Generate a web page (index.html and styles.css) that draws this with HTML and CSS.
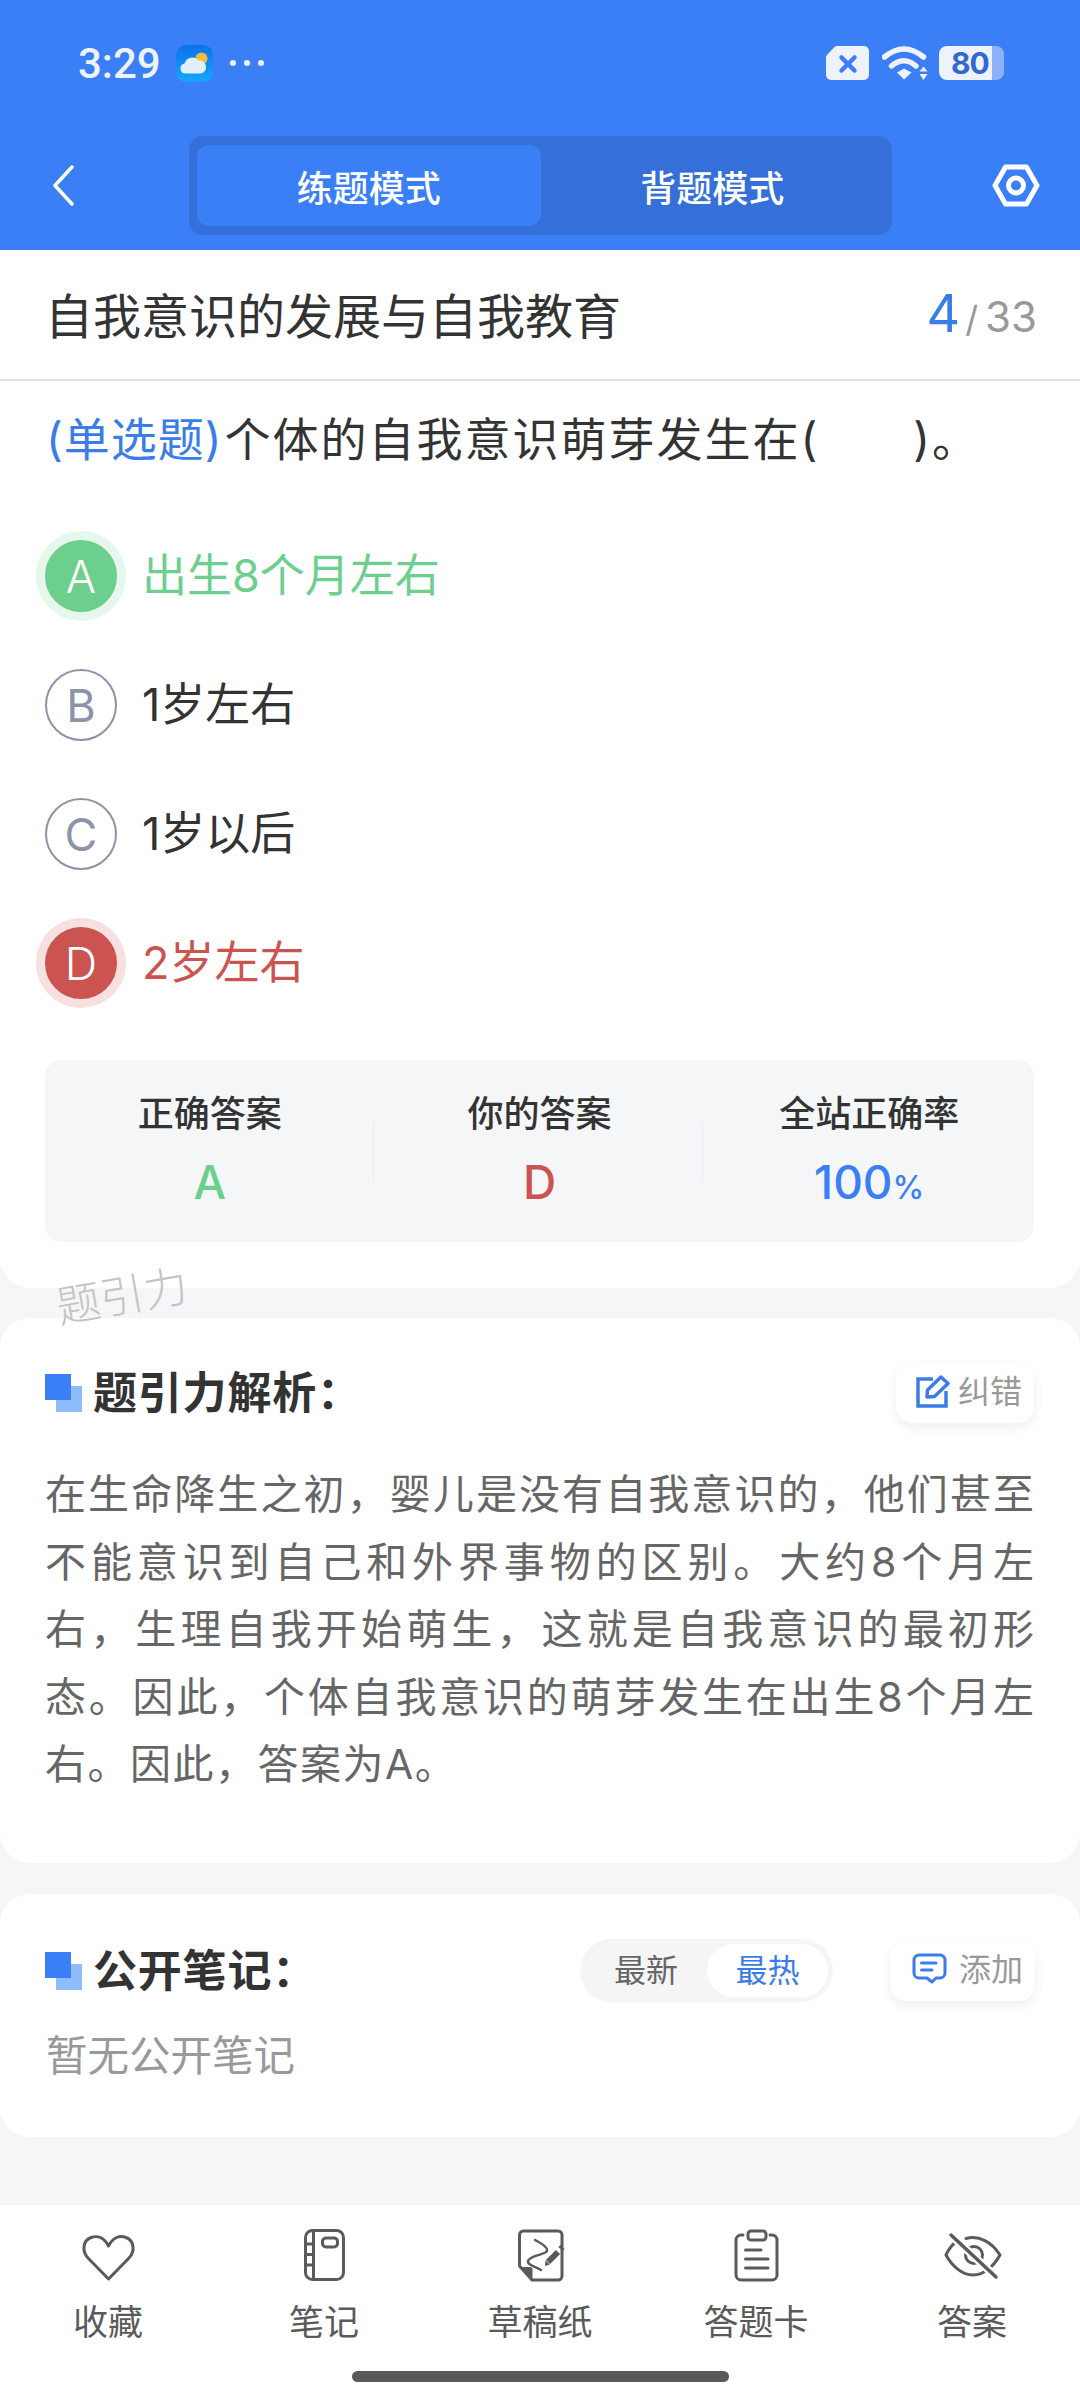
FILE: index.html
```html
<!DOCTYPE html>
<html lang="zh-CN">
<head>
  <meta charset="UTF-8">
  <meta name="viewport" content="width=device-width, initial-scale=1.0">
  <title>练题模式</title>
  <link rel="stylesheet" href="styles.css">
</head>
<body>
  <header class="top">
    <div class="status">
      <span class="time">3:29</span>
      <svg class="weather" width="37" height="37" viewBox="0 0 37 37">
        <defs>
          <linearGradient id="sky" x1="0" y1="0" x2="0" y2="1">
            <stop offset="0" stop-color="#0a72ef"/>
            <stop offset="1" stop-color="#17a6fb"/>
          </linearGradient>
        </defs>
        <rect width="37" height="37" rx="10" fill="url(#sky)"/>
        <circle cx="25.500" cy="13.500" r="6" fill="#f6bb3c"/>
        <path d="M9.500 28.500a5 5 0 0 1-1-9.900a8 8 0 0 1 14-3a6.500 6.500 0 0 1 2 13z" fill="#dff0fc"/>
      </svg>
      <span class="dots"><i></i><i></i><i></i></span>
      <span class="status-right">
        <svg width="43" height="34" viewBox="0 0 43 34">
          <path d="M11 0H38a5 5 0 0 1 5 5V29a5 5 0 0 1-5 5H5a5 5 0 0 1-5-5V12a4 4 0 0 1 1-3L8 1.500A4 4 0 0 1 11 0z" fill="#edf2fd"/>
          <path d="M15.500 11.500l13 13M28.500 11.500l-13 13" stroke="#3b7ff6" stroke-width="4.500" stroke-linecap="round"/>
        </svg>
        <svg class="wifi" width="46" height="34" viewBox="0 0 46 34">
          <path d="M2.500 11Q22-5 41.500 11" fill="none" stroke="#edf2fd" stroke-width="5.500" stroke-linecap="round"/>
          <path d="M9.500 20Q22 9.500 34 20" fill="none" stroke="#edf2fd" stroke-width="5.500" stroke-linecap="round"/>
          <path d="M15 26.500L22 22.500L29.500 26.500L22 33.500z" fill="#edf2fd"/>
          <path d="M37.500 25.500L41.500 20.500L45.500 25.500zM37.500 28H45.500L41.500 34z" fill="#edf2fd"/>
        </svg>
        <span class="battery">80</span>
      </span>
    </div>
    <nav class="bar">
      <svg class="back" width="22" height="41" viewBox="0 0 22 41">
        <path d="M20 2L3 20.500L20 39" fill="none" stroke="#fff" stroke-width="3.500" stroke-linecap="round" stroke-linejoin="round"/>
      </svg>
      <div class="tabs">
        <span class="tab active">练题模式</span>
        <span class="tab">背题模式</span>
      </div>
      <svg class="gear" width="48" height="43" viewBox="0 0 48 43">
        <path d="M13.500 3H34.500L45 21.500L34.500 40H13.500L3 21.500z" fill="none" stroke="#fff" stroke-width="5" stroke-linejoin="round"/>
        <circle cx="24" cy="21.500" r="7.500" fill="none" stroke="#fff" stroke-width="5"/>
      </svg>
    </nav>
  </header>

  <section class="card question">
    <div class="chapter">
      <h1>自我意识的发展与自我教育</h1>
      <div class="count"><b>4</b><span class="slash">/</span><span>33</span></div>
    </div>
    <p class="stem"><span class="kind">(单选题)</span>个体的自我意识萌芽发生在(<span class="blank"></span>)。</p>

    <ul class="options">
      <li class="option right"><span class="letter">A</span><span class="text">出生8个月左右</span></li>
      <li class="option"><span class="letter">B</span><span class="text">1岁左右</span></li>
      <li class="option"><span class="letter">C</span><span class="text">1岁以后</span></li>
      <li class="option wrong"><span class="letter">D</span><span class="text">2岁左右</span></li>
    </ul>

    <div class="stats">
      <div class="stat">
        <span class="stat-name">正确答案</span>
        <span class="stat-value green">A</span>
      </div>
      <div class="stat">
        <span class="stat-name">你的答案</span>
        <span class="stat-value red">D</span>
      </div>
      <div class="stat">
        <span class="stat-name">全站正确率</span>
        <span class="stat-value blue">100<small>%</small></span>
      </div>
    </div>
  </section>

  <div class="watermark">题引力</div>

  <section class="card analysis">
    <div class="card-head">
      <h2 class="heading">题引力解析：</h2>
      <span class="mini-btn">
        <svg width="34" height="33" viewBox="0 0 34 33">
          <path d="M17 4H2V31H30V16" fill="none" stroke="#3b7de8" stroke-width="3.500"/>
          <path d="M11 22L11.500 15L25 2L32 8.500L18.500 21.500z" fill="none" stroke="#3b7de8" stroke-width="3.500" stroke-linejoin="round"/>
        </svg>
        <span class="mini-text">纠错</span>
      </span>
    </div>
    <div class="explain">
      <span class="line">在生命降生之初，婴儿是没有自我意识的，他们甚至</span>
      <span class="line">不能意识到自己和外界事物的区别。大约8个月左</span>
      <span class="line">右，生理自我开始萌生，这就是自我意识的最初形</span>
      <span class="line">态。因此，个体自我意识的萌芽发生在出生8个月左</span>
      <span class="line last">右。因此，答案为A。</span>
    </div>
  </section>

  <section class="card notes">
    <div class="card-head">
      <h2 class="heading">公开笔记：</h2>
      <div class="sort">
        <span class="sort-item">最新</span>
        <span class="sort-item on">最热</span>
      </div>
      <span class="mini-btn add">
        <svg width="35" height="31" viewBox="0 0 35 31">
          <path d="M7 2H28a5 5 0 0 1 5 5V20a5 5 0 0 1-5 5H24L20 29L15 25H7a5 5 0 0 1-5-5V7a5 5 0 0 1 5-5z" fill="none" stroke="#3b7de8" stroke-width="3" stroke-linejoin="round"/>
          <path d="M9.500 10H24M9.500 17H20" stroke="#3b7de8" stroke-width="3" stroke-linecap="round"/>
        </svg>
        <span class="mini-text">添加</span>
      </span>
    </div>
    <p class="empty">暂无公开笔记</p>
  </section>

  <footer class="tools">
    <div class="tool-row">
      <div class="tool">
        <svg width="60" height="60" viewBox="0 0 60 60">
          <path d="M30.500 53L10 32C3.500 25 5 14.500 13 11.500C20 9 26.500 12 30.500 20C34.500 12 41 9 48 11.500C56 14.500 57.500 25 51 32z" class="ink"/>
        </svg>
        <span>收藏</span>
      </div>
      <div class="tool">
        <svg width="60" height="60" viewBox="0 0 60 60">
          <rect x="11.500" y="4.500" width="38" height="49" rx="7" class="ink"/>
          <path d="M19.500 4.500V53.500M11.500 18H19.500M11.500 28.500H19.500M11.500 39H19.500" class="ink"/>
          <rect x="28.500" y="12" width="15" height="9" rx="3.500" class="ink"/>
        </svg>
        <span>笔记</span>
      </div>
      <div class="tool">
        <svg width="60" height="60" viewBox="0 0 60 60">
          <path d="M9.500 40V9a4 4 0 0 1 4-4H48a4 4 0 0 1 4 4V50a4 4 0 0 1-4 4H22z" class="ink"/>
          <path d="M10.500 41H20a2.500 2.500 0 0 1 2.500 2.500V53z" fill="#5a5a5a"/>
          <path d="M25 14C31 17 38 21 37 25C35 29 20 29 18 35C17 39 26 41 31 44" class="ink thin"/>
          <path d="M38 36L48 26" class="ink fat"/>
          <path d="M35 40L35.500 34.500L40 38.500z" fill="#5a5a5a"/>
          <path d="M50.500 23L52.500 21" class="ink fat"/>
        </svg>
        <span>草稿纸</span>
      </div>
      <div class="tool">
        <svg width="60" height="60" viewBox="0 0 60 60">
          <path d="M17 9H15a5 5 0 0 0-5 5V49a5 5 0 0 0 5 5H46a5 5 0 0 0 5-5V14a5 5 0 0 0-5-5H44" class="ink"/>
          <rect x="22" y="5" width="18" height="9" rx="3" class="ink"/>
          <path d="M19.500 24H35M19.500 33H42M19.500 42H42" class="ink"/>
        </svg>
        <span>答题卡</span>
      </div>
      <div class="tool">
        <svg width="60" height="60" viewBox="0 0 60 60">
          <path d="M4 29C7 22 11 18 15 15M24 12.500C37 9 50 16 58 29C52 40 42 49 31 49C20 49 10 40 4 29" class="ink"/>
          <circle cx="32" cy="29" r="8.500" class="ink"/>
          <path d="M9 9L54 51" stroke="#fff" stroke-width="8"/>
          <path d="M9 9L54 51" class="ink wide"/>
        </svg>
        <span>答案</span>
      </div>
    </div>
    <div class="home-bar"></div>
  </footer>
</body>
</html>
```

FILE: styles.css
```css
* {
  box-sizing: border-box;
}

body {
  margin: 0;
  width: 1080px;
  height: 2400px;
  position: relative;
  display: flex;
  flex-direction: column;
  overflow: hidden;
  background-color: #f5f6f8;
  color: #333;
  font-family: Inter, "Noto Sans CJK SC", sans-serif;
}

h1, h2, p, ul {
  margin: 0;
  padding: 0;
}

svg {
  display: block;
  flex-shrink: 0;
}

.top {
  height: 250px;
  background-color: #3b7ff6;
  color: #fff;
}

.status {
  height: 126px;
  padding: 0 88px 0 78px;
  display: flex;
  align-items: center;
  color: #edf2fd;
}

.time {
  width: 98px;
  font-family: Roboto, sans-serif;
  font-size: 42px;
  font-weight: 500;
}

.dots {
  margin-left: 17px;
  display: flex;
  gap: 8px;
}

.dots i {
  width: 6px;
  height: 6px;
  border-radius: 50%;
  background-color: #edf2fd;
}

.status-right {
  margin-left: auto;
  display: flex;
  align-items: center;
}

.wifi {
  margin: 0 11px 0 13px;
}

.battery {
  position: relative;
  width: 53px;
  height: 34px;
  padding-left: 12px;
  border-radius: 8px 0 0 8px;
  background-color: #edf2fd;
  color: #3169d3;
  font-size: 30px;
  font-weight: 700;
  line-height: 34px;
  letter-spacing: -1px;
}

.battery::after {
  content: "";
  position: absolute;
  left: 53px;
  top: 0;
  width: 12px;
  height: 34px;
  border-radius: 0 8px 8px 0;
  background-color: #8db0f8;
}

.bar {
  padding: 0 40px 0 52px;
  display: flex;
  align-items: center;
  height: 119px;
}

.tabs {
  margin-left: 115px;
  width: 703px;
  height: 99px;
  padding: 9px 8px;
  display: flex;
  border-radius: 14px;
  background-color: #356fd9;
}

.tab {
  flex: 1;
  display: flex;
  align-items: center;
  justify-content: center;
  border-radius: 12px;
  font-size: 36px;
  font-weight: 500;
}

.tab.active {
  background-color: #3b7ff6;
}

.gear {
  margin-left: auto;
}

.card {
  background-color: #fff;
  border-radius: 30px;
}

.question {
  height: 1038px;
  border-radius: 0 0 30px 30px;
}

.chapter {
  height: 131px;
  padding: 0 43px 3px 45px;
  display: flex;
  align-items: center;
  justify-content: space-between;
  border-bottom: 2px solid #e2e2e2;
}

h1 {
  font-size: 48px;
  font-weight: 400;
}

.count {
  display: flex;
  align-items: baseline;
  color: #999;
  font-size: 42px;
}

.count b {
  color: #3b7de8;
  font-size: 52px;
  font-weight: 400;
}

.slash {
  margin: 0 7px 0 5px;
  font-size: 36px;
}

.stem {
  margin-top: 28px;
  padding-left: 46px;
  font-size: 46px;
  line-height: 60px;
  letter-spacing: 2px;
  white-space: nowrap;
}

.kind {
  margin-right: 2px;
  color: #3b7de8;
  letter-spacing: 1px;
}

.blank {
  display: inline-block;
  width: 94px;
}

.options {
  margin-top: 71px;
  padding-left: 45px;
  display: flex;
  flex-direction: column;
  gap: 57px;
  list-style: none;
}

.option {
  height: 72px;
  display: flex;
  align-items: center;
  font-size: 45px;
}

.text {
  margin-top: -7px;
}

.letter {
  width: 72px;
  height: 72px;
  margin-right: 25px;
  display: flex;
  align-items: center;
  justify-content: center;
  border: 2px solid #8d93a8;
  border-radius: 50%;
  color: #8d93a8;
  font-size: 45px;
  font-weight: 400;
}

.right {
  color: #6ccf8d;
}

.right .letter {
  border-color: #6ccf8d;
  background-color: #6ccf8d;
  box-shadow: 0 0 0 9px #e6f7ec;
  color: #fff;
  font-weight: 300;
}

.wrong {
  color: #cb5450;
}

.wrong .letter {
  border-color: #cb5450;
  background-color: #cb5450;
  box-shadow: 0 0 0 9px #f6e0e0;
  color: #fff;
  font-weight: 300;
}

.stats {
  margin: 61px 46px 0 45px;
  height: 182px;
  padding-top: 29px;
  display: flex;
  border-radius: 16px;
  background-color: #f5f6f8;
}

.stat {
  flex: 1;
  position: relative;
  display: flex;
  flex-direction: column;
  align-items: center;
  gap: 13px;
}

.stat + .stat::before {
  content: "";
  position: absolute;
  left: -2px;
  top: 32px;
  height: 60px;
  border-left: 1px solid #ebedf0;
}

.stat-name {
  font-size: 36px;
  font-weight: 500;
  line-height: 50px;
}

.stat-value {
  font-size: 46px;
  font-weight: 500;
  line-height: 60px;
}

.stat-value small {
  font-size: 32px;
}

.green {
  color: #6ccf8d;
}

.red {
  color: #cb5450;
}

.blue {
  color: #3b7ff6;
}

.watermark {
  position: absolute;
  left: 56px;
  top: 1271px;
  color: #c4c4c4;
  font-size: 44px;
  font-weight: 300;
  line-height: 50px;
  transform: rotate(-10deg);
}

.analysis {
  margin-top: 30px;
  height: 545px;
  padding: 45px 46px 0 45px;
}

.notes {
  margin-top: 31px;
  height: 243px;
  padding: 45px 45px 0;
}

.card-head {
  display: flex;
  align-items: center;
}

.heading {
  position: relative;
  padding-left: 48px;
  margin-right: auto;
  font-size: 44px;
  font-weight: 700;
  line-height: 60px;
  letter-spacing: 0.800px;
}

.heading::before,
.heading::after {
  content: "";
  position: absolute;
  width: 26px;
  height: 26px;
}

.heading::before {
  left: 11px;
  top: 23px;
  background-color: #8fbcfb;
}

.heading::after {
  left: 0;
  top: 11px;
  background-color: #3b7ff6;
}

.mini-btn {
  width: 138px;
  height: 60px;
  padding: 0 0 4px 20px;
  display: flex;
  align-items: center;
  gap: 8px;
  border-radius: 16px;
  background-color: #fff;
  box-shadow: 0 4px 12px rgba(0, 0, 0, 0.07);
  color: #999;
  font-size: 32px;
}

.mini-text {
  margin-top: -4px;
}

.add {
  width: 145px;
  margin-left: 57px;
  padding-left: 22px;
  gap: 12px;
}

.explain {
  margin-top: 38px;
  color: #666;
  font-size: 41px;
  line-height: 67.500px;
}

.line {
  display: block;
  text-align: justify;
  text-align-last: justify;
  white-space: nowrap;
}

.line.last {
  text-align-last: left;
  letter-spacing: 1.500px;
}

.sort {
  width: 253px;
  height: 63px;
  padding: 5px;
  display: flex;
  border-radius: 32px;
  background-color: #f5f5f5;
  font-size: 32px;
  color: #666;
}

.sort-item {
  flex: 1;
  display: flex;
  align-items: center;
  justify-content: center;
  padding-bottom: 6px;
  border-radius: 27px;
}

.sort-item.on {
  flex: 0 0 121px;
  background-color: #fff;
  color: #3b7de8;
}

.empty {
  margin-top: 24px;
  padding-left: 1px;
  color: #999;
  font-size: 41.500px;
  line-height: 60px;
}

.tools {
  margin-top: auto;
  height: 195px;
  background-color: #fff;
}

.tool-row {
  display: flex;
  padding-top: 21px;
}

.tool {
  flex: 1;
  display: flex;
  flex-direction: column;
  align-items: center;
  gap: 11px;
  color: #5a5a5a;
  font-size: 35px;
  line-height: 50px;
}

.ink {
  fill: none;
  stroke: #5a5a5a;
  stroke-width: 3;
  stroke-linecap: round;
  stroke-linejoin: round;
}

.thin {
  stroke-width: 2.500;
}

.fat {
  stroke-width: 6;
  stroke-linecap: butt;
}

.wide {
  stroke-width: 3.500;
}

.home-bar {
  width: 377px;
  height: 11px;
  margin: 24px auto 0;
  border-radius: 6px;
  background-color: #5a5a5a;
}
```
